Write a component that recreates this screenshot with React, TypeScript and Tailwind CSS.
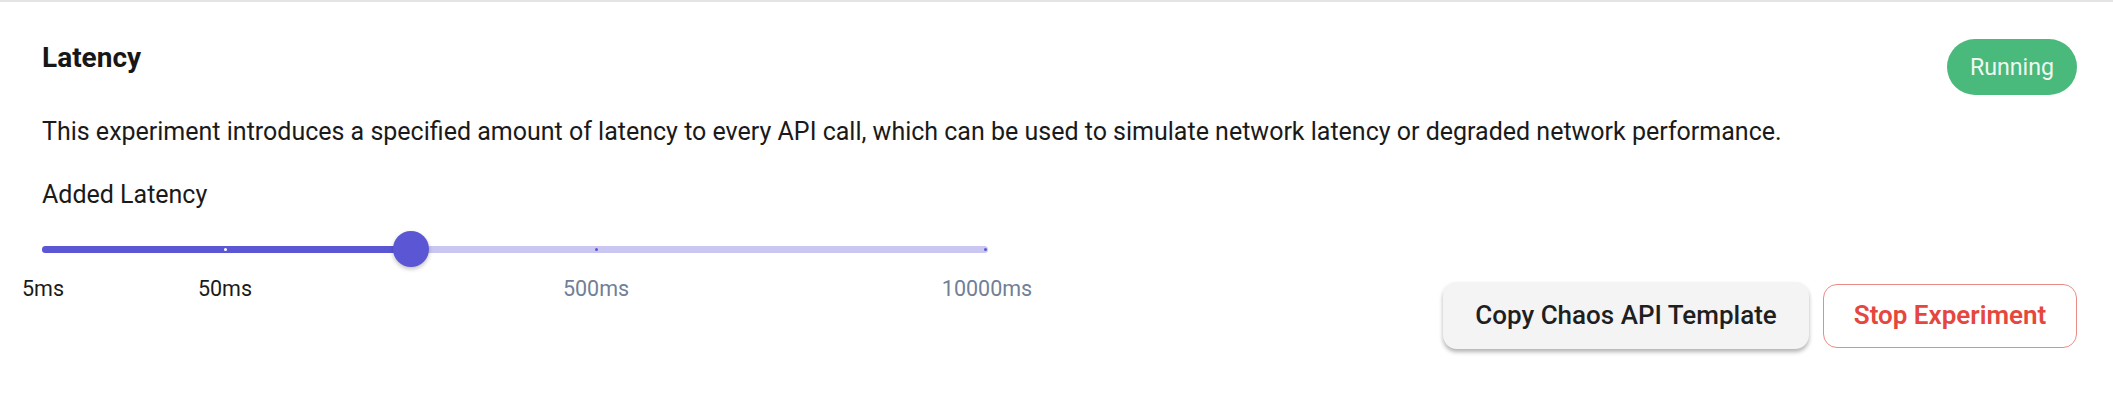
const TRACK_START = 0
const TRACK_END = 946
const VALUE_X = 369

const MARKS = [
  { label: '5ms', x: 1, active: true, tick: false },
  { label: '50ms', x: 183, active: true, tick: true },
  { label: '500ms', x: 554, active: false, tick: true },
  { label: '10000ms', x: 945, active: false, tick: true },
]

function LatencySlider() {
  return (
    <div className="relative w-[946px]">
      <div className="relative h-9">
        <div className="absolute left-0 right-0 top-[15px] h-[7px] rounded-full bg-[#c9c6f1]" />
        <div
          className="absolute left-0 top-[15px] h-[7px] rounded-full bg-[#5b56d4]"
          style={{ width: VALUE_X - TRACK_START }}
        />
        {MARKS.filter(m => m.tick).map(m => (
          <div
            key={m.label}
            className={
              m.active
                ? 'absolute top-[17px] h-[3px] w-[3px] rounded-full bg-white'
                : 'absolute top-[17px] h-[3px] w-[3px] rounded-full bg-[#5b56d4]'
            }
            style={{ left: Math.min(m.x, TRACK_END - 3) - 1 }}
          />
        ))}
        <div
          className="absolute top-0 h-9 w-9 rounded-full bg-[#5b56d4] shadow-[0_2px_4px_rgba(0,0,0,0.25)]"
          style={{ left: VALUE_X - 18 }}
        />
      </div>
      <div className="relative mt-[6px] h-8">
        {MARKS.map(m => (
          <span
            key={m.label}
            className={
              m.active
                ? 'absolute top-0 -translate-x-1/2 text-[21.5px] leading-8 text-[#1a1a1a]'
                : 'absolute top-0 -translate-x-1/2 text-[21.5px] leading-8 text-[#718096]'
            }
            style={{ left: m.x }}
          >
            {m.label}
          </span>
        ))}
      </div>
    </div>
  )
}

export default function App() {
  return (
    <div className="min-h-[412px] w-full border-t-2 border-[#e4e4e4] bg-white pl-[42px] pr-[36px] font-['Roboto',sans-serif] text-[#1a1a1a]">
      <div className="flex items-start justify-between pt-[37px]">
        <h2 className="mt-[3px] text-[28px] font-bold leading-8 text-[#171717]">Latency</h2>
        <span className="flex h-14 w-[130px] items-center justify-center rounded-full bg-[#49b97c] text-[23.2px] text-[#eef8f1]">
          Running
        </span>
      </div>

      <p className="mt-[21px] text-[25px] leading-8 text-[#1a1a1a]">
        This experiment introduces a specified amount of latency to every API call, which can be used to simulate network latency or degraded network performance.
      </p>

      <p className="mt-[31px] text-[25px] leading-8 text-[#1a1a1a]">Added Latency</p>

      <div className="mt-[20px] flex items-start justify-between">
        <LatencySlider />
        <div className="mt-[51px] flex items-center gap-[14px]">
          <button className="h-[67px] w-[366px] rounded-[14px] bg-[#f4f4f4] text-[26px] font-medium text-[#1f1f1f] shadow-[0_3px_4px_rgba(0,0,0,0.3)]">
            Copy Chaos API Template
          </button>
          <button className="h-16 w-[254px] rounded-[14px] border-[1.5px] border-[#ec8a86] bg-white text-[26px] font-semibold text-[#e5473f]">
            Stop Experiment
          </button>
        </div>
      </div>
    </div>
  )
}
